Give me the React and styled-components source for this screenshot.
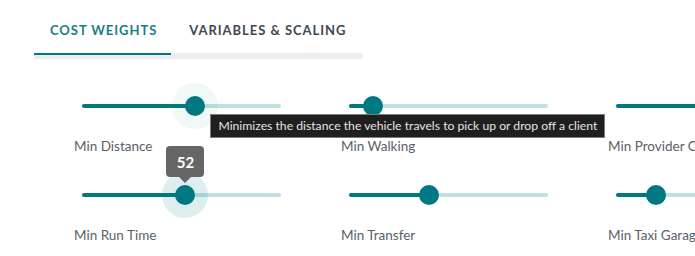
import React from "react";
import styled, { createGlobalStyle } from "styled-components";

const GlobalStyle = createGlobalStyle`
  html, body {
    margin: 0;
    padding: 0;
    background: #ffffff;
    overflow: hidden;
  }
  body {
    font-family: Lato, "Open Sans", sans-serif;
  }
`;

const Page = styled.div`
  width: 695px;
  height: 256px;
  padding: 8px 0 0 34px;
  box-sizing: border-box;
  overflow: hidden;
`;

const TabsBox = styled.div`
  display: inline-flex;
  flex-direction: column;
`;

const TabRow = styled.div`
  display: flex;
`;

const Tab = styled.div`
  height: 45px;
  line-height: 45px;
  padding: 0 16px;
  font-size: 13px;
  font-weight: 700;
  letter-spacing: 0.95px;
  text-transform: uppercase;
  color: ${(p) => (p.$active ? "#1a7e86" : "#3f4850")};
`;

const TabRail = styled.div`
  height: 6px;
  background: #ebeef1;
`;

const Indicator = styled.div`
  width: 137px;
  height: 2px;
  background: #007a82;
`;

const Grid = styled.div`
  display: grid;
  grid-template-columns: repeat(3, 267px);
  row-gap: 18px;
  margin: 25px 0 0 40px;
  width: 801px;
`;

const Cell = styled.div`
  display: flex;
  flex-direction: column;
`;

const SliderBox = styled.div`
  position: relative;
  height: 44px;
  width: 199px;
  margin-left: 8px;
`;

const Rail = styled.div`
  position: absolute;
  left: 0;
  right: 0;
  top: 20px;
  height: 4px;
  border-radius: 2px;
  background: #bfe0e1;
`;

const Track = styled.div`
  position: absolute;
  left: 0;
  top: 20px;
  height: 4px;
  border-radius: 2px;
  background: #007881;
`;

const Halo = styled.div`
  position: absolute;
  top: -1px;
  width: 46px;
  height: 46px;
  margin-left: -23px;
  border-radius: 50%;
  background: ${(p) => (p.$focus ? "rgba(0, 120, 129, 0.13)" : "rgba(0, 120, 129, 0.055)")};
`;

const Thumb = styled.div`
  position: absolute;
  top: 12px;
  width: 20px;
  height: 20px;
  margin-left: -10px;
  border-radius: 50%;
  background: #007881;
`;

const ValueLabel = styled.div`
  position: absolute;
  top: -39px;
  left: 50%;
  transform: translateX(-50%);
  width: 38px;
  height: 31px;
  border-radius: 4px;
  background: #666666;
  color: #ffffff;
  font-size: 15px;
  font-weight: 700;
  display: flex;
  align-items: center;
  justify-content: center;

  &::after {
    content: "";
    position: absolute;
    bottom: -6px;
    left: 50%;
    margin-left: -6px;
    border-left: 6px solid transparent;
    border-right: 6px solid transparent;
    border-top: 6px solid #666666;
  }
`;

const Label = styled.div`
  margin-top: 9px;
  font-size: 13.5px;
  line-height: 18px;
  color: #5b6168;
  white-space: nowrap;
`;

const Tooltip = styled.div`
  position: absolute;
  top: 30px;
  z-index: 5;
  height: 24px;
  box-sizing: border-box;
  padding: 0 7px;
  line-height: 22px;
  white-space: nowrap;
  background: #1f1f1f;
  border: 1px solid #7a7a7a;
  color: #e4e4e4;
  font-size: 12.2px;
`;

const weights = [
  { name: "Min Distance", value: 57, hover: true, tip: "Minimizes the distance the vehicle travels to pick up or drop off a client" },
  { name: "Min Walking", value: 12 },
  { name: "Min Provider Cost", value: 70 },
  { name: "Min Run Time", value: 52, focus: true },
  { name: "Min Transfer", value: 40 },
  { name: "Min Taxi Garage", value: 20 },
];

const WeightSlider = ({ value, hover, focus, tip }) => (
  <SliderBox>
    <Rail />
    <Track style={{ width: `${value}%` }} />
    {(hover || focus) && <Halo $focus={focus} style={{ left: `${value}%` }} />}
    <Thumb style={{ left: `${value}%` }}>
      {focus && <ValueLabel>{value}</ValueLabel>}
    </Thumb>
    {tip && <Tooltip style={{ left: `calc(${value}% + 15px)` }}>{tip}</Tooltip>}
  </SliderBox>
);

const App = () => {
  return (
    <>
      <GlobalStyle />
      <Page>
        <TabsBox>
          <TabRow>
            <Tab $active>Cost Weights</Tab>
            <Tab>Variables &amp; Scaling</Tab>
          </TabRow>
          <TabRail>
            <Indicator />
          </TabRail>
        </TabsBox>
        <Grid>
          {weights.map((w, index) => (
            <Cell key={index}>
              <WeightSlider {...w} />
              <Label>{w.name}</Label>
            </Cell>
          ))}
        </Grid>
      </Page>
    </>
  );
};

export default App;
